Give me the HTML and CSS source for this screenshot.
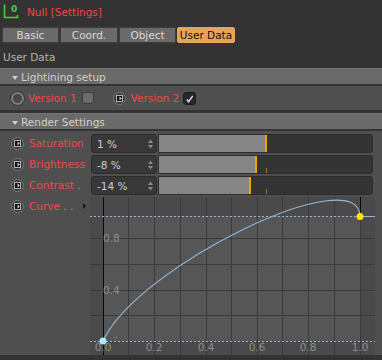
FILE: index.html
```html
<!DOCTYPE html>
<html>
    <head>
        <meta charset="utf-8">
        <title>Null [Settings]</title>
        <link rel="stylesheet" href="styles.css">
    </head>
    <body>
        <svg class="defs" width="0" height="0">
            <symbol id="anim" viewBox="0 0 13 13">
                <circle cx="6.5" cy="6.5" r="6" fill="#3a3a3a" stroke="#7a7a7a"/>
                <rect x="3.5" y="3.5" width="6" height="6" fill="#0e0e0e" stroke="#b8b8b8"/>
                <path d="M6.5 4.5 L8.8 6.5 L6.5 8.5 Z" fill="#d8d8d8"/>
            </symbol>
            <symbol id="spin" viewBox="0 0 5 10">
                <path d="M0 4 L2.5 0.5 L5 4 Z M0 6 L2.5 9.5 L5 6 Z" fill="#8a8a8a"/>
            </symbol>
        </svg>

        <div class="titlebar">
            <svg class="obj-icon" width="18" height="18" viewBox="0 0 18 18">
                <path d="M1.5 1.5 V14.5 H14.5 V12" fill="none" stroke="#3fd23f" stroke-width="1.6"/>
                <text x="8" y="9" class="obj-zero">0</text>
            </svg>
            <span class="title">Null [Settings]</span>
        </div>

        <div class="tabs">
            <span class="tab w57">Basic</span>
            <span class="tab w58">Coord.</span>
            <span class="tab w57">Object</span>
            <span class="tab w58 active">User Data</span>
        </div>

        <div class="section-label">User Data</div>

        <div class="group">
            <div class="group-head">Lightining setup</div>
            <div class="group-body options">
                <span class="radio"></span>
                <span class="label lbl-v1">Version 1</span>
                <span class="check"></span>
                <svg class="anim icon-v2"><use href="#anim"/></svg>
                <span class="label lbl-v2">Version 2</span>
                <span class="check on">
                    <svg width="12" height="12" viewBox="0 0 12 12"><path d="M3 6.5 L5 9 L9.5 2.5" fill="none" stroke="#e0e0e0" stroke-width="1.5"/></svg>
                </span>
            </div>
        </div>

        <div class="group">
            <div class="group-head">Render Settings</div>
            <div class="group-body params">
                <div class="param">
                    <svg class="anim"><use href="#anim"/></svg>
                    <span class="label name">Saturation</span>
                    <span class="field">1 %<svg class="spin"><use href="#spin"/></svg></span>
                    <span class="slider"><span class="fill" style="width: 50.5%"></span></span>
                </div>
                <div class="param">
                    <svg class="anim"><use href="#anim"/></svg>
                    <span class="label name">Brightness</span>
                    <span class="field">-8 %<svg class="spin"><use href="#spin"/></svg></span>
                    <span class="slider"><span class="fill" style="width: 46%"></span><span class="tick"></span></span>
                </div>
                <div class="param">
                    <svg class="anim"><use href="#anim"/></svg>
                    <span class="label name">Contrast<span class="dots"> .</span></span>
                    <span class="field">-14 %<svg class="spin"><use href="#spin"/></svg></span>
                    <span class="slider"><span class="fill" style="width: 43%"></span><span class="tick"></span></span>
                </div>
                <div class="param curve-row">
                    <svg class="anim"><use href="#anim"/></svg>
                    <span class="label name">Curve<span class="dots"> . .</span><span class="open"></span></span>
                    <svg class="graph" width="285" height="158" viewBox="0 0 285 158">
                        <rect x="0" y="0" width="285" height="158" fill="#4a4a4a"/>
                        <rect x="13" y="19" width="257" height="125" fill="#565656"/>
                        <g stroke="#3a3a3a" stroke-width="1">
                            <path d="M38.5 0 V158 M64.5 0 V158 M90.5 0 V158 M116.5 0 V158 M141.5 0 V158 M167.5 0 V158 M192.5 0 V158 M218.5 0 V158 M244.5 0 V158 M270.5 19 V158"/>
                            <path d="M0 41.5 H285 M0 67.5 H285 M0 93.5 H285 M0 118.5 H285"/>
                        </g>
                        <path d="M13.5 0 V158 M270.5 0 V19" stroke="#080808" stroke-width="1"/>
                        <g class="axis">
                            <text x="13" y="45">0.8</text>
                            <text x="13" y="97">0.4</text>
                            <text x="24" y="143">-</text>
                            <text x="13" y="154" text-anchor="middle">0.0</text>
                            <text x="64" y="154" text-anchor="middle">0.2</text>
                            <text x="116" y="154" text-anchor="middle">0.4</text>
                            <text x="167" y="154" text-anchor="middle">0.6</text>
                            <text x="218" y="154" text-anchor="middle">0.8</text>
                            <text x="270" y="154" text-anchor="middle">1.0</text>
                        </g>
                        <path d="M0 144.5 H285 M0 19.5 H285" stroke="#8fb6d8" stroke-width="1" stroke-dasharray="2 2"/>
                        <path d="M13 144 C48 68 270 -38 270 19.5 H285" fill="none" stroke="#92b8da" stroke-width="1.2"/>
                        <circle cx="13" cy="144" r="3.5" fill="#a8ecff"/>
                        <circle cx="270" cy="19.5" r="3.5" fill="#ffe600"/>
                    </svg>
                </div>
            </div>
        </div>
    </body>
</html>
```
FILE: styles.css
```css
body{
    margin: 0;
    background: #333333;
    font-family: "DejaVu Sans", Verdana, sans-serif;
    font-size: 10.5px;
    color: #d4d4d4;
    overflow: hidden;
}
.defs{
    position: absolute;
}

.titlebar{
    display: flex;
    align-items: flex-start;
    height: 27px;
}
.obj-icon{
    margin: 3px 0 0 3px;
}
.obj-zero{
    font-family: "DejaVu Sans", sans-serif;
    font-size: 9px;
    font-weight: bold;
    fill: #3fd23f;
}
.title{
    margin-left: 6px;
    line-height: 25px;
    color: #f04646;
}

.tabs{
    display: flex;
    gap: 1px;
    padding-left: 2px;
}
.tab{
    box-sizing: border-box;
    height: 16px;
    line-height: 14px;
    text-align: center;
    background: #6a6a6a;
    border: 1px solid #3e3e3e;
    color: #d8d8d8;
}
.w57{ width: 57px; }
.w58{ width: 58px; }
.tab.active{
    background: #e8a358;
    border-color: #e8a358;
    border-radius: 2px;
    color: #111;
}

.section-label{
    box-sizing: border-box;
    height: 25px;
    padding: 5px 0 0 3px;
    line-height: 18px;
    color: #b4b4b4;
}

.group + .group{
    margin-top: 3px;
}
.group-head{
    box-sizing: border-box;
    height: 16px;
    padding: 1px 0 0 21px;
    line-height: 15px;
    background: #6a6a6a;
    border-top: 1px solid #767676;
    color: #d0d0d0;
    position: relative;
}
.group-head:before{
    position: absolute;
    left: 12px;
    top: 7px;
    border-left: 3px solid transparent;
    border-right: 3px solid transparent;
    border-top: 4px solid #d0d0d0;
    content: '';
}
.group-body{
    margin-top: 2px;
    background: #4f4f4f;
}

.label{
    color: #f04848;
}
.options{
    display: flex;
    align-items: center;
    height: 24px;
    line-height: 24px;
}
.radio{
    box-sizing: border-box;
    width: 13px;
    height: 13px;
    margin-left: 11px;
    border-radius: 50%;
    border: 2px solid #7e7e7e;
    background: #474747;
    box-shadow: 0 0 0 1px #3a3a3a;
}
.lbl-v1{ margin-left: 4px; }
.check{
    box-sizing: border-box;
    display: flex;
    width: 12px;
    height: 12px;
    margin-left: 5px;
    border-radius: 3px;
    background: #6c6c6c;
    border: 1px solid #3c3c3c;
}
.check.on{
    margin-left: 4px;
    width: 13px;
    height: 13px;
    background: #262626;
    border-color: #1c1c1c;
}
.anim{
    width: 13px;
    height: 13px;
    flex: none;
}
.icon-v2{ margin-left: 19px; }
.lbl-v2{ margin-left: 5px; }

.params{
    padding: 2px 0 0 0;
}
.param{
    display: flex;
    align-items: center;
    height: 21px;
    padding-left: 11px;
}
.name{
    width: 62px;
    margin-left: 5px;
    line-height: 21px;
    white-space: nowrap;
    position: relative;
}
.dots{
    color: #9a9a9a;
}
.field{
    box-sizing: border-box;
    display: flex;
    align-items: center;
    justify-content: space-between;
    width: 66px;
    height: 19px;
    padding: 0 3px 0 5px;
    background: #383838;
    border: 1px solid #2c2c2c;
    border-radius: 3px;
    color: #c6cee2;
}
.spin{
    width: 5px;
    height: 10px;
}
.slider{
    box-sizing: border-box;
    position: relative;
    display: block;
    width: 215px;
    height: 19px;
    margin-left: 1px;
    background: #343434;
    border: 1px solid #2c2c2c;
    border-radius: 0 3px 3px 0;
}
.fill{
    box-sizing: border-box;
    display: block;
    height: 100%;
    background: #858585;
    border-right: 2px solid #f5a300;
}
.tick{
    position: absolute;
    left: 107px;
    bottom: 0;
    width: 1px;
    height: 5px;
    background: #9c7424;
}

.curve-row{
    align-items: flex-start;
    height: auto;
}
.curve-row .anim{
    margin-top: 4px;
}
.open{
    position: absolute;
    left: 54px;
    top: 7px;
    border-top: 3px solid transparent;
    border-bottom: 3px solid transparent;
    border-left: 3px solid #151515;
}
.graph{
    display: block;
    flex: none;
    margin: 1px 0 0 -1px;
}
.axis text{
    font-family: "DejaVu Sans", sans-serif;
    font-size: 10.5px;
    fill: #8e8e8e;
}
```
